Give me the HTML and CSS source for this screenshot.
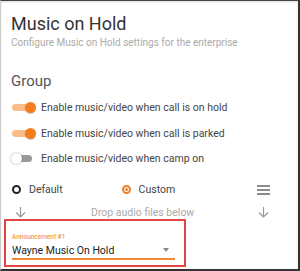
FILE: index.html
```html
<!DOCTYPE html>
<html>
<head>
<meta charset="utf-8">
<link rel="stylesheet" href="styles.css">
</head>
<body>
<div class="frame">
  <h1 class="title">Music on Hold</h1>
  <p class="subtitle">Configure Music on Hold settings for the enterprise</p>
  <h2 class="group">Group</h2>
  <div class="toggles">
    <div class="toggle-row"><span class="switch on"><span class="knob"></span></span><span class="label">Enable music/video when call is on hold</span></div>
    <div class="toggle-row"><span class="switch on"><span class="knob"></span></span><span class="label">Enable music/video when call is parked</span></div>
    <div class="toggle-row"><span class="switch off"><span class="knob"></span></span><span class="label">Enable music/video when camp on</span></div>
  </div>
  <div class="radio-row">
    <span class="radio-opt"><span class="radio"></span><span class="rlabel">Default</span></span>
    <span class="radio-opt custom"><span class="radio sel"></span><span class="rlabel">Custom</span></span>
    <svg class="menu" width="13" height="10" viewBox="0 0 13 10"><path d="M0 1h13M0 5h13M0 9h13" stroke="#666" stroke-width="1.4"/></svg>
  </div>
  <div class="drop-row">
    <svg class="arrow" width="11" height="11" viewBox="0 0 11 11"><path d="M5.5 0v10M1 5.5l4.5 4.5 4.5-4.5" stroke="#999" stroke-width="1.2" fill="none"/></svg>
    <span class="drop-text">Drop audio files below</span>
    <svg class="arrow" width="11" height="11" viewBox="0 0 11 11"><path d="M5.5 0v10M1 5.5l4.5 4.5 4.5-4.5" stroke="#999" stroke-width="1.2" fill="none"/></svg>
  </div>
  <div class="select-box">
    <div class="field">
      <div class="flabel">Announcement #1</div>
      <div class="fvalue"><span>Wayne Music On Hold</span><span class="caret"></span></div>
    </div>
  </div>
</div>
</body>
</html>
```
FILE: styles.css
```css
html, body { margin: 0; padding: 0; background: #fff; }
.frame {
  box-sizing: border-box;
  width: 300px;
  height: 271px;
  border-top: 1px solid #444;
  border-left: 1px solid #ccc;
  border-right: 2px solid #333;
  border-bottom: 2px solid #333;
  box-shadow: inset 0 1px 2px rgba(0,0,0,0.15);
  font-family: Roboto, "Liberation Sans", sans-serif;
  padding: 0 0 0 10px;
  overflow: hidden;
}
.title { margin: 12px 0 0 0; font-size: 18px; font-weight: 400; color: #333; line-height: 22px; }
.subtitle { margin: 2px 0 0 0; font-size: 10px; color: #aaa; line-height: 12px; }
.group { margin: 23px 0 0 0; font-size: 15px; font-weight: 400; color: #555; line-height: 18px; }
.toggles { margin-top: 7px; display: flex; flex-direction: column; gap: 4px; }
.toggle-row { display: flex; align-items: center; height: 21.5px; }
.switch { position: relative; width: 20px; height: 7px; border-radius: 4px; margin-left: 1px; }
.switch.on { background: #f9bd8a; }
.switch.off { background: #9a9a9a; }
.knob { position: absolute; top: -2px; width: 11px; height: 11px; border-radius: 50%; }
.switch.on .knob { left: 13px; background: #f47d20; box-shadow: 0 1px 1px rgba(0,0,0,0.2); }
.switch.off .knob { left: -1px; background: #fff; box-shadow: 0 0 2px rgba(0,0,0,0.45); }
.label { margin-left: 9px; font-size: 10.5px; color: #444; }
.radio-row { display: flex; align-items: center; margin-top: 12px; height: 16px; }
.radio-opt { display: flex; align-items: center; }
.radio { box-sizing: border-box; width: 9px; height: 9px; border-radius: 50%; border: 2px solid #222; margin-left: 1px; }
.radio.sel { border-color: #f47d20; position: relative; }
.radio.sel::after { content: ""; position: absolute; left: 1px; top: 1px; width: 3px; height: 3px; border-radius: 50%; background: #f47d20; }
.rlabel { margin-left: 8px; font-size: 10.5px; color: #444; }
.custom { margin-left: 58px; }
.menu { margin-left: auto; margin-right: 28px; }
.drop-row { display: flex; align-items: center; margin-top: 9px; height: 12px; }
.arrow { margin-left: 4px; }
.drop-text { margin-left: 65px; font-size: 10.5px; color: #aaa; }
.arrow:last-child { margin-left: auto; margin-right: 29px; }
.select-box { box-sizing: border-box; margin: 0 0 0 -7px; width: 182px; height: 48px; border: 2px solid #e24545; padding: 12px 0 0 6px; }
.field { width: 163px; border-bottom: 2px solid #f0873a; }
.flabel { font-size: 6.5px; color: #f47d20; line-height: 8px; }
.fvalue { display: flex; align-items: center; justify-content: space-between; font-size: 10.5px; color: #222; line-height: 15px; margin-top: 2px; }
.caret { width: 0; height: 0; border-left: 3.5px solid transparent; border-right: 3.5px solid transparent; border-top: 4px solid #888; margin-right: 6px; }
```
